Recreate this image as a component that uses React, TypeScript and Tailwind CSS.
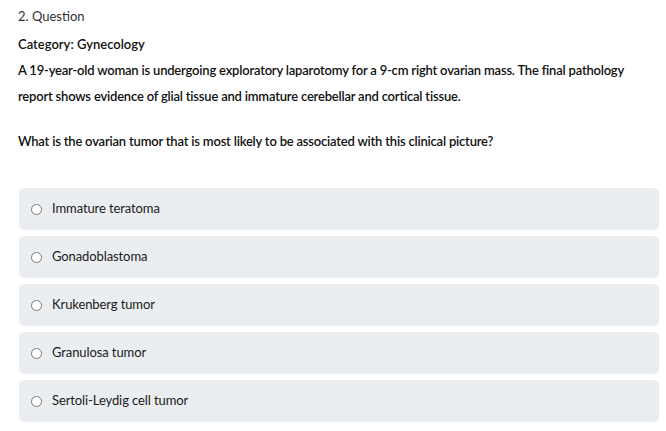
const options = [
  "Immature teratoma",
  "Gonadoblastoma",
  "Krukenberg tumor",
  "Granulosa tumor",
  "Sertoli-Leydig cell tumor",
]

export default function App() {
  return (
    <div className="w-[666px] h-[431px] bg-white font-['Lato',sans-serif] text-[#111] overflow-hidden">
      <div className="pl-[18px] pr-[8px] pt-[6px]">
        <p className="text-[13px] leading-[20px] text-[#333]">2. Question</p>
        <p className="mt-[8px] text-[13px] leading-[20px] font-semibold">Category: Gynecology</p>
        <p className="mt-[3px] text-[13px] leading-[26px] font-semibold tracking-[-0.2px]">
          A 19-year-old woman is undergoing exploratory laparotomy for a 9-cm right ovarian mass. The final pathology
          report shows evidence of glial tissue and immature cerebellar and cortical tissue.
        </p>
        <p className="mt-[19px] text-[13px] leading-[26px] font-semibold tracking-[-0.2px]">
          What is the ovarian tumor that is most likely to be associated with this clinical picture?
        </p>
        <div className="mt-[34px] flex flex-col gap-[6px] pl-px w-[641px]">
          {options.map((o) => (
            <label key={o} className="h-[42px] rounded-[5px] bg-[#ebeef1] flex items-center pl-[12px]">
              <span className="w-[11px] h-[11px] rounded-full border border-[#777] bg-white mr-[10px]" />
              <span className="text-[13px] text-[#1a1a1a] tracking-[-0.1px]">{o}</span>
            </label>
          ))}
        </div>
      </div>
    </div>
  )
}
